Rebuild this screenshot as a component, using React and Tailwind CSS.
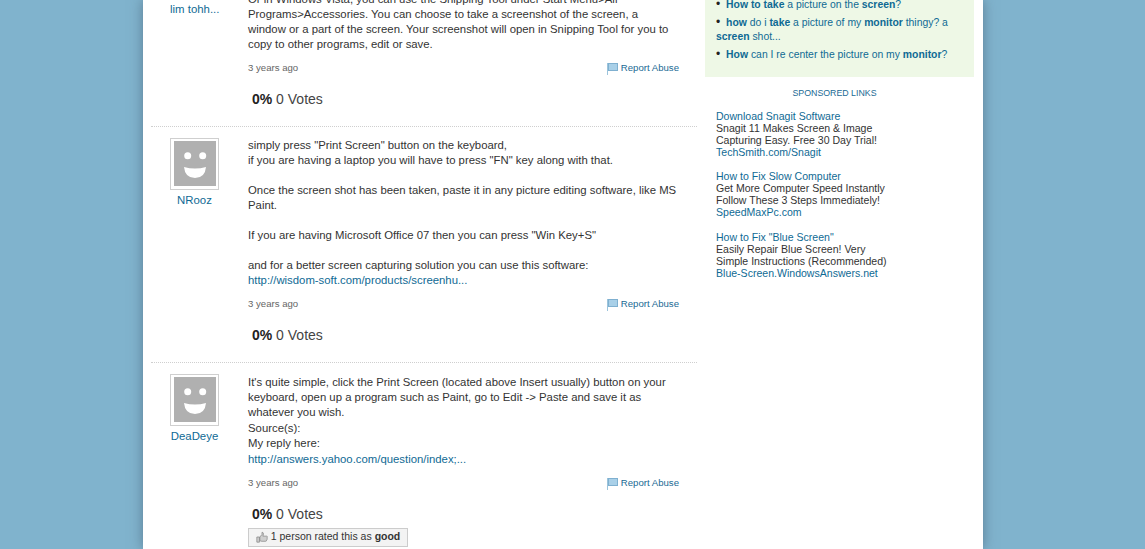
const font = { fontFamily: '"Liberation Sans", Arial, sans-serif' };

function Avatar() {
  return (
    <div className="w-[49px] h-[52px] border border-[#cfcfcf] bg-white flex items-center justify-center">
      <svg viewBox="0 0 42 45" className="w-[42px] h-[45px] block">
        <rect width="42" height="45" fill="#b0b0b0" />
        <circle cx="13.700" cy="14.700" r="3.500" fill="#fff" />
        <circle cx="28.700" cy="14.700" r="3.500" fill="#fff" />
        <path d="M10 26 Q21 29 32 26 Q31 37 21 37 Q11 37 10 26Z" fill="#fff" />
      </svg>
    </div>
  );
}

function Flag() {
  return (
    <svg width="11" height="13" viewBox="0 0 11 13" className="block">
      <rect x="0" y="1" width="1" height="12" fill="#9cc4dc" />
      <rect x="1.500" y="1.500" width="9" height="7" fill="#a9d0e8" stroke="#7fb0d0" strokeWidth="1" />
    </svg>
  );
}

function Thumb() {
  return (
    <svg width="12" height="12" viewBox="0 0 14 14" className="block shrink-0">
      <path d="M1 7h3v6H1zM4.500 7l2.500-3V1.500c1.500 0 2 1.200 1.500 3L8 6h4.500c.8 0 1 1 .5 1.500.5.500.4 1.300-.2 1.600.3.600.1 1.200-.5 1.500.2.800-.2 1.400-1 1.400H7c-1 0-1.800-.4-2.500-.8z" fill="#cfcfcf" stroke="#888" strokeWidth="0.9" />
    </svg>
  );
}

function Answer({ name, children, button, textClass }) {
  return (
    <div className="flex">
      <div className="w-[97px] pl-[19px] shrink-0 flex flex-col items-start">
        <Avatar />
        <a className="w-[49px] text-center text-[11.4px] leading-[15px] text-[#0f6a94] mt-[3px] whitespace-nowrap">{name}</a>
      </div>
      <div className="w-[431px]">
        <div className={`text-[11.35px] leading-[15px] text-[#333] whitespace-nowrap ${textClass || ""}`}>{children}</div>
        <div className="flex justify-between items-center h-[14px] mt-[10px]">
          <span className="text-[9.600px] text-[#666]">3 years ago</span>
          <span className="flex items-center gap-[3px] text-[9.600px] text-[#1a6a94]"><Flag />Report Abuse</span>
        </div>
        <div className="text-[14px] leading-[16px] text-[#444] mt-[15px] pl-[4px]"><b className="text-[#222]">0%</b> 0 Votes</div>
        {button && (
          <div className="mt-[6px] w-[160px] h-[19px] border border-[#cccccc] bg-[#f3f3f3] flex items-center justify-center gap-[3px] text-[10.500px] text-[#333] whitespace-nowrap">
            <Thumb /><span>1 person rated this as <b>good</b></span>
          </div>
        )}
      </div>
    </div>
  );
}

const L = ({ children }) => <a className="text-[#0f6a94]">{children}</a>;

function Ad({ title, lines, url, className }) {
  return (
    <div className={`text-[10.550px] leading-[12px] text-[#333] whitespace-nowrap ${className}`}>
      <div className="text-[#0f6a94]">{title}</div>
      {lines.map((l) => <div key={l}>{l}</div>)}
      <div className="text-[#0f6a94]">{url}</div>
    </div>
  );
}

const Dot = () => <span className="text-[#222] mr-[3px] text-[12px]">•</span>;

export default function App() {
  return (
    <div className="h-[549px] overflow-hidden bg-[#80b3cd] pl-[143px]" style={font}>
      <div className="w-[840px] h-[549px] bg-white shadow-[0_0_12px_rgba(60,80,100,0.55)] flex pl-[8px]">
        <div className="w-[546px] shrink-0 -mt-[53px]">
          <Answer name="lim tohh..." textClass="pt-[44.500px]">
            Or in Windows Vista, you can use the Snipping Tool under Start Menu&gt;All<br />
            Programs&gt;Accessories. You can choose to take a screenshot of the screen, a<br />
            window or a part of the screen. Your screenshot will open in Snipping Tool for you to<br />
            copy to other programs, edit or save.
          </Answer>
          <div className="border-b border-dotted border-[#cfcfcf] mt-[19px] mb-[11px]" />
          <Answer name="NRooz">
            simply press "Print Screen" button on the keyboard,<br />
            if you are having a laptop you will have to press "FN" key along with that.<br /><br />
            Once the screen shot has been taken, paste it in any picture editing software, like MS<br />
            Paint.<br /><br />
            If you are having Microsoft Office 07 then you can press "Win Key+S"<br /><br />
            and for a better screen capturing solution you can use this software:<br />
            <L>http://wisdom-soft.com/products/screenhu...</L>
          </Answer>
          <div className="border-b border-dotted border-[#cfcfcf] mt-[19px] mb-[11px]" />
          <Answer name="DeaDeye" button textClass="pt-[1px]">
            It's quite simple, click the Print Screen (located above Insert usually) button on your<br />
            keyboard, open up a program such as Paint, go to Edit -&gt; Paste and save it as<br />
            whatever you wish.
            <div className="pt-[1px]">Source(s):</div>
            <div>My reply here:</div>
            <div className="pt-[1px]"><L>http://answers.yahoo.com/question/index;...</L></div>
          </Answer>
        </div>
        <div className="w-[269px] ml-[8px] shrink-0">
          <div className="h-[80px] bg-[#eef8e6] px-[11px] text-[10.400px] leading-[14px] text-[#0f6a94] -mt-[3px]">
            <div><Dot /> <b>How to take</b> a picture on the <b>screen</b>?</div>
            <div className="mt-[3px]"><Dot /> <b>how</b> do i <b>take</b> a picture of my <b>monitor</b> thingy? a <b>screen</b> shot...</div>
            <div className="mt-[3px]"><Dot /> <b>How</b> can I re center the picture on my <b>monitor</b>?</div>
          </div>
          <div className="text-center text-[8.800px] leading-[12px] text-[#1a6a94] mt-[10px] mb-[11px] pr-[10px]">SPONSORED LINKS</div>
          <div className="pl-[11px]">
            <Ad className="mb-[12px]" title="Download Snagit Software" lines={["Snagit 11 Makes Screen & Image", "Capturing Easy. Free 30 Day Trial!"]} url="TechSmith.com/Snagit" />
            <Ad className="mb-[13px]" title="How to Fix Slow Computer" lines={["Get More Computer Speed Instantly", "Follow These 3 Steps Immediately!"]} url="SpeedMaxPc.com" />
            <Ad title='How to Fix "Blue Screen"' lines={["Easily Repair Blue Screen! Very", "Simple Instructions (Recommended)"]} url="Blue-Screen.WindowsAnswers.net" />
          </div>
        </div>
      </div>
    </div>
  );
}
